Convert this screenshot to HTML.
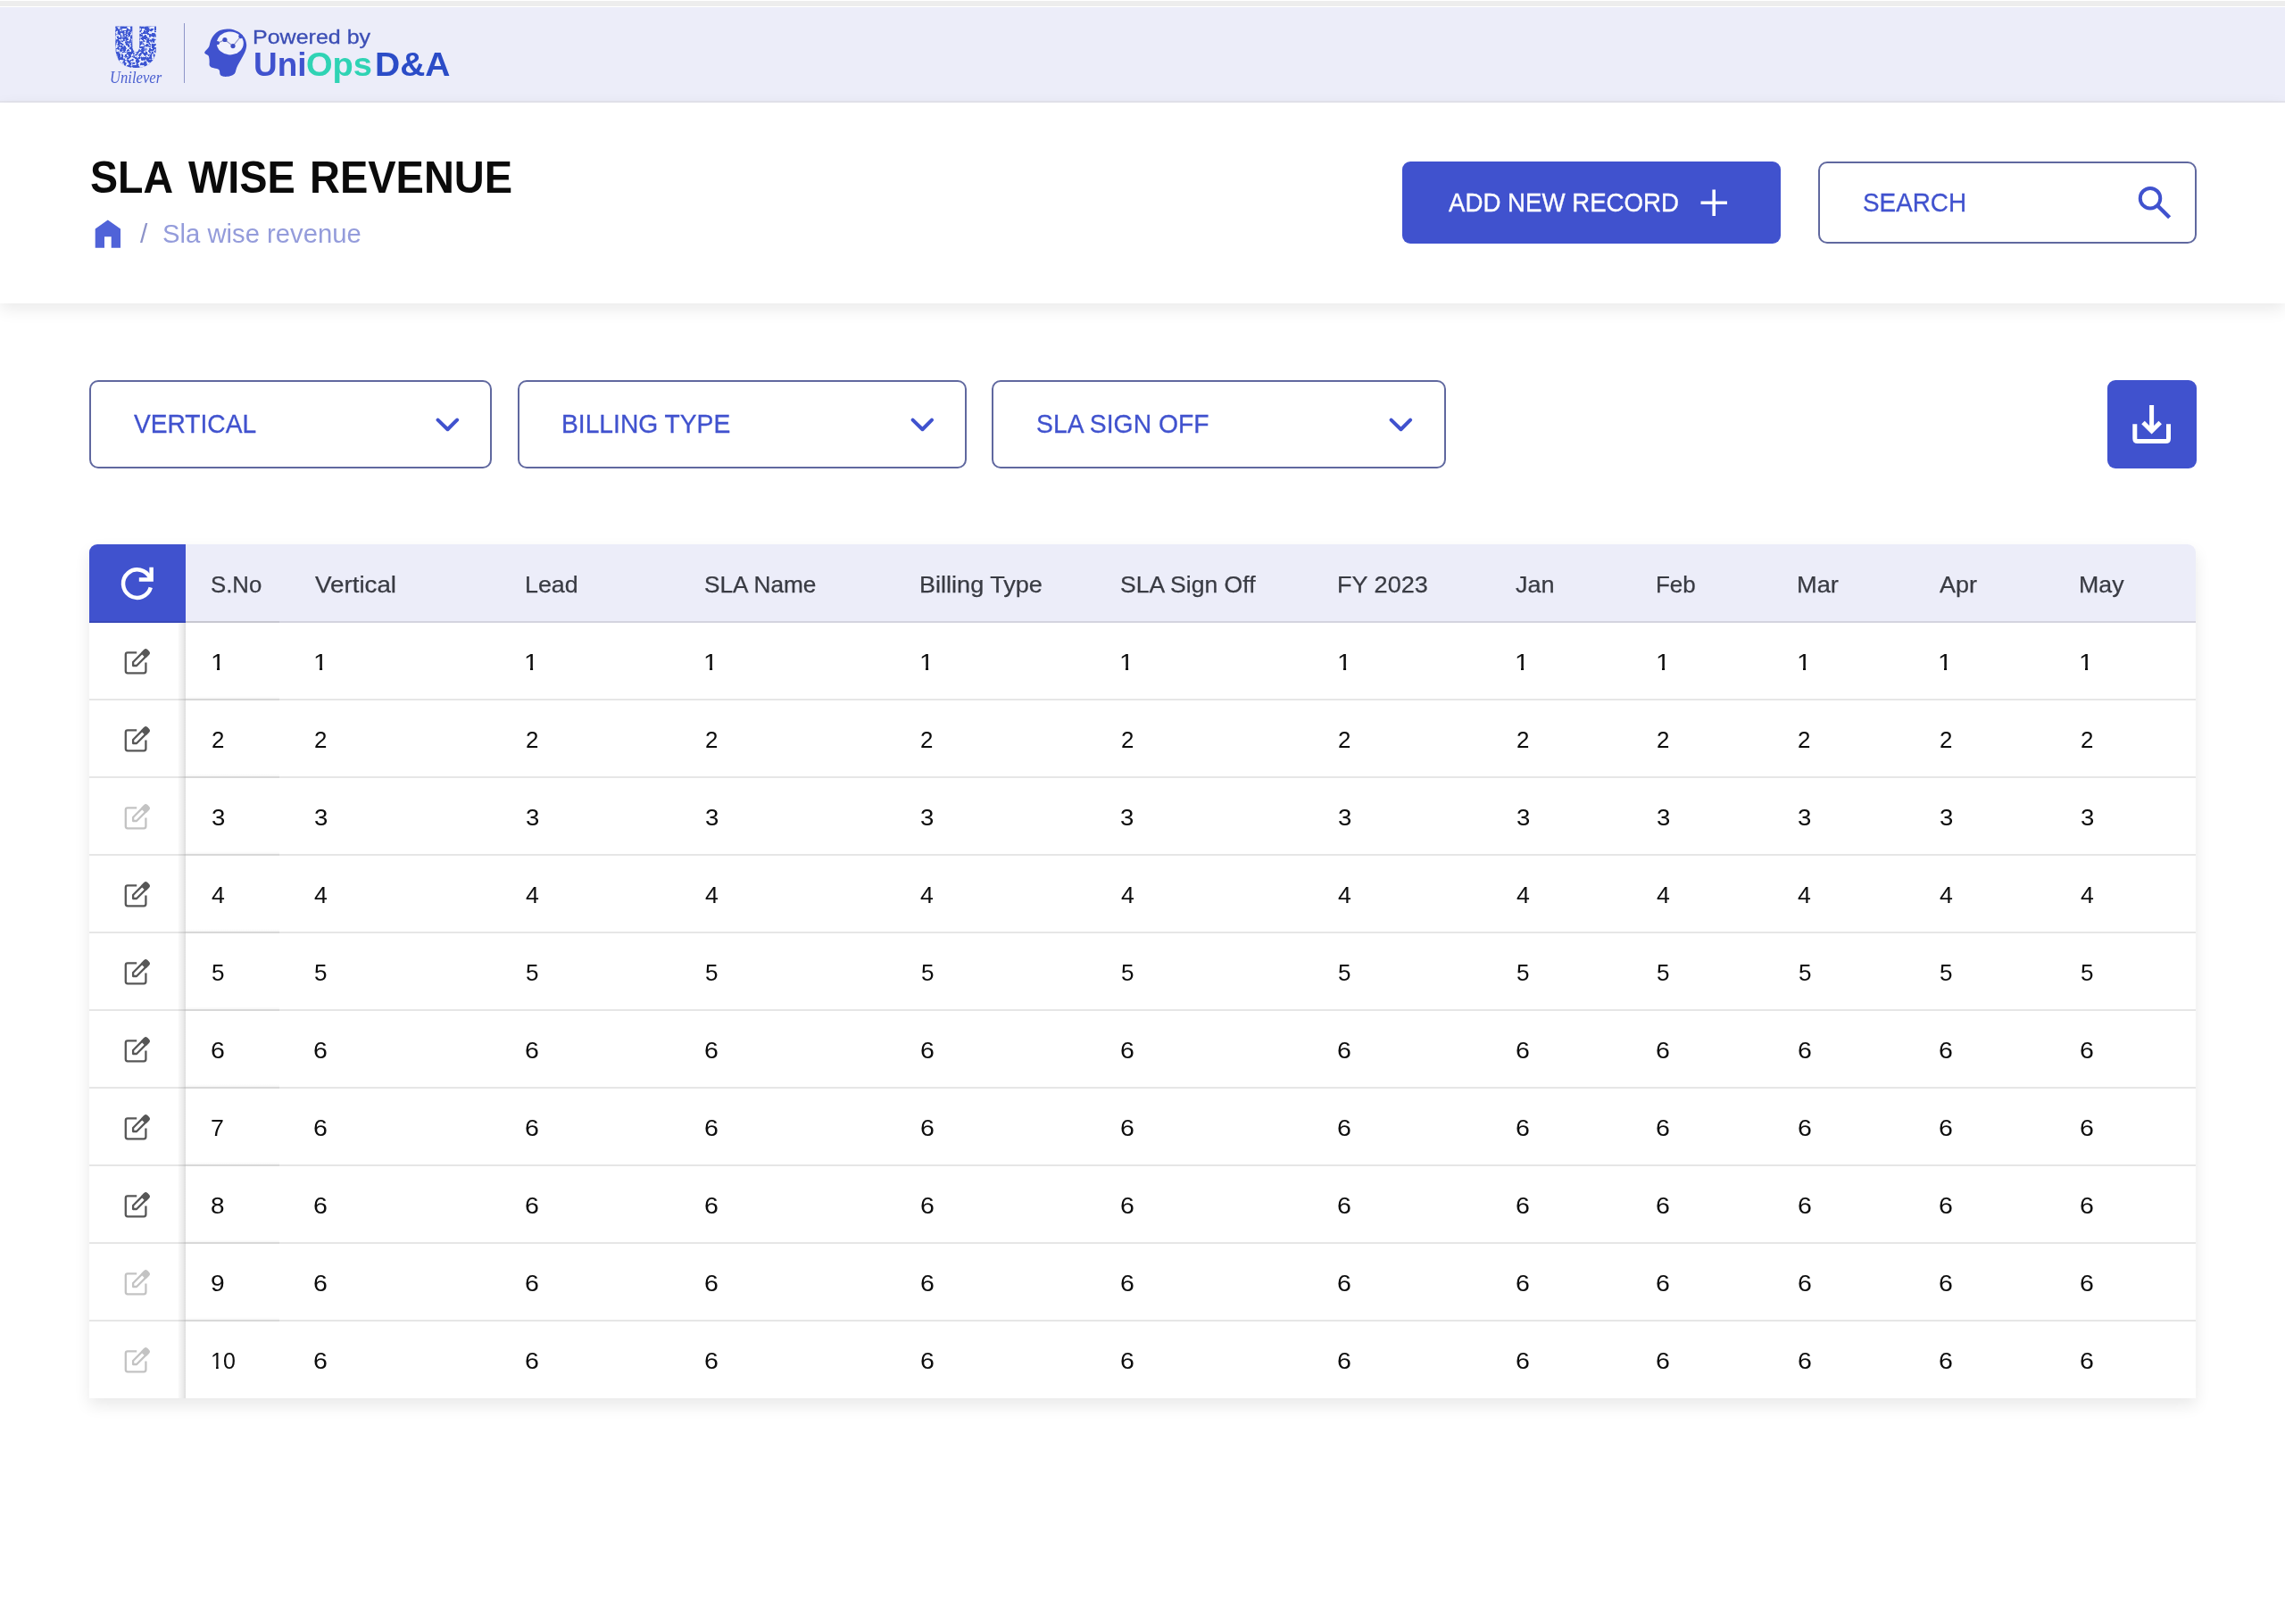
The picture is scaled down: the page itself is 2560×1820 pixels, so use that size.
<!DOCTYPE html>
<html lang="en">
<head>
<meta charset="utf-8">
<title>SLA Wise Revenue</title>
<style>
*{box-sizing:border-box;margin:0;padding:0}
html,body{width:2560px;height:1820px;background:#fff;overflow:hidden}
body{position:relative;font-family:"Liberation Sans",sans-serif;color:#111}
.abs{position:absolute}
.t{position:absolute;white-space:nowrap;line-height:1}
.f{transform-origin:0 0}
/* top strip + header bar */
#strip{left:0;top:1px;width:2560px;height:6px;background:#ededed}
#topbar{left:0;top:8px;width:2560px;height:107px;background:#ecedf9;border-bottom:2px solid #e4e4ed}
/* title section */
#titlesec{left:0;top:115px;width:2560px;height:225px;background:#fff;box-shadow:0 6px 18px rgba(0,0,0,.09)}
/* buttons */
#addbtn{left:1571px;top:181px;width:424px;height:92px;background:#4052ce;border-radius:9px}
#search{left:2037px;top:181px;width:424px;height:92px;border:2px solid #60689f;border-radius:10px;background:#fff}
/* filters */
.filter{position:absolute;top:426px;height:99px;border:2px solid #60689f;border-radius:10px;background:#fff}
#dl{left:2361px;top:426px;width:100px;height:99px;background:#4052ce;border-radius:9px}
/* table */
#tbl{left:100px;top:610px;width:2360px;height:957px;background:#fff;border-radius:9px 9px 0 0;box-shadow:0 8px 18px rgba(0,0,0,.09)}
#thead{left:100px;top:610px;width:2360px;height:88px;background:#ecedf9;border-radius:9px 9px 0 0}
#thblue{left:100px;top:610px;width:108px;height:88px;background:#4052ce;border-radius:9px 0 0 0}
.th{color:#393b43;-webkit-text-stroke:.25px #393b43}
.rowline{position:absolute;left:100px;width:2360px;height:2px;background:#e6e6e6}
.rowline2{position:absolute;left:208px;width:105px;height:5px;background:linear-gradient(to bottom,rgba(0,0,0,0),rgba(0,0,0,.035) 60%,rgba(0,0,0,.035) 60%,#d8d8d8 60%)}
#hband2{left:208px;top:696px;width:105px;height:2px;background:rgba(0,0,0,.06)}
.td{color:#0d0d0d}
.one{clip-path:polygon(0 0,.347em 0,.347em 1em,.24em 1em,.24em .735em,0 .735em)}
.ten{clip-path:polygon(0 0,100% 0,100% 1em,.53em 1em,.53em .735em,.347em .735em,.347em 1em,.243em 1em,.243em .735em,0 .735em)}
#colshadow{left:199px;top:698px;width:9px;height:869px;background:linear-gradient(to right,rgba(0,0,0,0),rgba(0,0,0,.03) 20%,rgba(0,0,0,.075) 65%,rgba(0,0,0,.135))}
#hband{left:100px;top:696px;width:2360px;height:2px;background:rgba(0,0,0,.10)}
</style>
</head>
<body>
<div class="abs" id="strip"></div>
<div class="abs" id="topbar"></div>
<div class="abs" id="titlesec"></div>
<svg class="abs" style="left:120px;top:24px" width="70" height="56" viewBox="120 24 70 56">
<defs>
<filter id="spk" x="0" y="0" width="100%" height="100%"><feTurbulence type="fractalNoise" baseFrequency="0.34" numOctaves="2" seed="7" result="n"/><feColorMatrix in="n" type="matrix" values="0 0 0 0 0.78  0 0 0 0 0.82  0 0 0 0 0.97  0 0 0 8 -3.8"/></filter>
<clipPath id="uc"><path d="M129.3,29.5H148.3V50Q148.3,58.5 152.4,58.5Q156.3,58.5 156.3,50V29.5H175V52Q175,76 152.2,76Q129.3,76 129.3,52Z"/></clipPath>
</defs>
<g clip-path="url(#uc)"><rect x="120" y="24" width="70" height="56" fill="#3d56d2"/><rect x="120" y="24" width="70" height="56" filter="url(#spk)"/></g>
</svg>
<div class="abs" style="left:205.5px;top:26px;width:1.6px;height:67px;background:#8d95c8"></div>
<svg class="abs" style="left:226px;top:28px" width="56" height="62" viewBox="226 28 56 62">
<path d="M254.5,32.4C266,32 276.2,40 276.2,50.5C276.2,56 273,61.5 270,66.7C267.5,71 265,75 264.3,78.8C263.8,82 262.5,83.5 260,84.4C256.5,85.8 253,86.2 250.5,85.8C248.2,85.4 246.6,84.6 246.3,82.6C246.1,81 246.3,79.4 245.4,78.3C244.2,76.9 242,76.9 240.3,76.5C238,76 236.5,75.6 235.6,74.6C234.4,73.2 234.5,72 234.6,70.5C234.7,68.5 234.6,66.5 234.2,64.6C234,63.5 233.9,62.8 233.3,62.2C232,61.2 230.4,60.8 229.5,59.8C228.8,59 229.2,58.2 230,57.2C231.5,55.5 233.4,54 234.2,52.2C235,50 235.2,48 235.8,46.2C236.6,43.5 237.8,41.5 239.5,39.4C241.5,37 243.8,35.3 246.4,34.1C249,33 251.5,32.5 254.5,32.4Z" fill="#4052ce"/>
<ellipse cx="257.8" cy="48.4" rx="15" ry="13" fill="#f1f2fc"/>
<path d="M244.6,48L251.9,44.5L261,51.6L269.6,41" stroke="#8a90c4" stroke-width="1.1" fill="none"/>
<circle cx="251.9" cy="44.5" r="2.6" fill="#3f4fc4"/><circle cx="261" cy="51.6" r="2.6" fill="#3f4fc4"/>
<circle cx="269.6" cy="40.8" r="2.4" fill="#4052ce"/><circle cx="243.8" cy="48.2" r="2.1" fill="#4052ce"/>
</svg>
<div class="t f " style="left:123.06px;top:78.00px;font-size:18.78px;transform:scaleX(0.8855);color:#4a5fd0;font-family:'Liberation Serif',serif;font-style:italic;">Unilever</div>
<div class="t f " style="left:283.14px;top:31.00px;font-size:21.82px;transform:scaleX(1.1469);color:#3c4eb5;-webkit-text-stroke:.3px #3c4eb5;">Powered by</div>
<div id="brand" style="position:absolute;left:0;top:0"><span class="t f " style="left:283.79px;top:54.00px;font-size:37.53px;transform:scaleX(0.9831);color:#4052ce;font-weight:700;">Uni</span><span class="t f " style="left:343.28px;top:54.00px;font-size:37.53px;transform:scaleX(1.0144);color:#2fd3b4;font-weight:700;">Ops</span> <span class="t f " style="left:419.87px;top:54.00px;font-size:37.53px;transform:scaleX(1.0402);color:#2b4cc7;font-weight:700;">D&amp;A</span></div>

<svg class="abs" style="left:104px;top:244px" width="34" height="36" viewBox="104 244 34 36"><path d="M120.8,246.4L135,256.5V277.8H124.7V265.3H117V277.8H106.7V256.5Z" fill="#5063d8"/></svg>
<div class="abs" id="addbtn"></div>
<svg class="abs" style="left:1900px;top:207px" width="40" height="40" viewBox="1900 207 40 40" stroke="#fff" stroke-width="3.6" fill="none"><path d="M1905.5,227.3H1935M1920.2,212.5V242"/></svg>
<div class="abs" id="search"></div>
<svg class="abs" style="left:2390px;top:204px" width="48" height="48" viewBox="2390 204 48 48" stroke="#4052ce" fill="none"><circle cx="2409" cy="222.2" r="11.25" stroke-width="4"/><path d="M2417,230.2L2430.6,243.8" stroke-width="4.4"/></svg>
<div class="filter" style="left:100px;width:451px"></div>
<div class="filter" style="left:580px;width:503px"></div>
<div class="filter" style="left:1111px;width:509px"></div>
<svg class="abs" style="left:484px;top:460px" width="36" height="32" viewBox="484 460 36 32" stroke="#4052ce" stroke-width="4.1" fill="none" stroke-linecap="round" stroke-linejoin="round"><path d="M490.6,470.6L501.5,481.2L512.1,470.6"/></svg>
<svg class="abs" style="left:1015.6px;top:460px" width="36" height="32" viewBox="1015.6 460 36 32" stroke="#4052ce" stroke-width="4.1" fill="none" stroke-linecap="round" stroke-linejoin="round"><path d="M1022.2,470.6L1033.05,481.2L1043.6,470.6"/></svg>
<svg class="abs" style="left:1552.4px;top:460px" width="36" height="32" viewBox="1552.4 460 36 32" stroke="#4052ce" stroke-width="4.1" fill="none" stroke-linecap="round" stroke-linejoin="round"><path d="M1559,470.6L1569.9,481.2L1580.5,470.6"/></svg>
<h1 id="title" style="position:absolute;left:0;top:0;font-size:inherit;font-weight:inherit"><span class="t f " style="left:100.60px;top:174.00px;font-size:49.45px;transform:scaleX(0.9410);color:#0b0b0b;font-weight:700;">SLA</span> <span class="t f " style="left:211.40px;top:174.00px;font-size:49.45px;transform:scaleX(0.9471);color:#0b0b0b;font-weight:700;">WISE</span> <span class="t f " style="left:347.23px;top:174.00px;font-size:49.45px;transform:scaleX(0.9500);color:#0b0b0b;font-weight:700;">REVENUE</span></h1>
<div class="t f " style="left:157.30px;top:247.00px;font-size:29.96px;transform:scaleX(0.9982);color:#8d93c9;">/</div>
<div class="t f " style="left:181.78px;top:247.00px;font-size:29.67px;transform:scaleX(0.9867);color:#949cdb;">Sla wise revenue</div>
<div class="t f " style="left:1622.53px;top:212.00px;font-size:29.53px;transform:scaleX(0.9363);color:#fff;-webkit-text-stroke:.35px #fff;">ADD NEW RECORD</div>
<div class="t f " style="left:2087.25px;top:212.00px;font-size:29.53px;transform:scaleX(0.9431);color:#4052ce;-webkit-text-stroke:.3px #4052ce;">SEARCH</div>
<div class="t f " style="left:150.26px;top:460.00px;font-size:29.96px;transform:scaleX(0.9392);color:#4052ce;-webkit-text-stroke:.3px #4052ce;">VERTICAL</div>
<div class="t f " style="left:629.27px;top:460.00px;font-size:29.96px;transform:scaleX(0.9420);color:#4052ce;-webkit-text-stroke:.3px #4052ce;">BILLING TYPE</div>
<div class="t f " style="left:1161.02px;top:460.00px;font-size:29.96px;transform:scaleX(0.9458);color:#4052ce;-webkit-text-stroke:.3px #4052ce;">SLA SIGN OFF</div>
<div class="abs" id="dl"></div>
<svg class="abs" style="left:2380px;top:445px" width="62" height="62" viewBox="2380 445 62 62" stroke="#fff" stroke-width="5" fill="none"><path d="M2391.8,475.3V491.5Q2391.8,494.5 2394.8,494.5H2426.5Q2429.5,494.5 2429.5,491.5V475.3"/><path d="M2410.6,454V482.5M2401,473.5L2410.6,483L2420.2,473.5" stroke-linejoin="miter"/></svg>
<div class="abs" id="tbl"></div>
<div class="abs" id="thead"></div>
<div class="abs" id="thblue"></div>
<div class="abs" id="hband"></div><div class="abs" id="hband2"></div>
<svg class="abs" style="left:124px;top:624px" width="60" height="60" viewBox="124 624 60 60" fill="none" stroke="#fff"><path d="M168.04,647.71A15.7,15.7 0 1 0 168.79,658.43" stroke-width="4.5"/><path d="M169.6,635.8V649.6H155.8" stroke-width="4.5" stroke-linejoin="miter"/></svg>
<div class="t f th" style="left:235.94px;top:643.00px;font-size:25.45px;transform:scaleX(1.0127);">S.No</div>
<div class="t f th" style="left:352.86px;top:643.00px;font-size:25.45px;transform:scaleX(1.0913);">Vertical</div>
<div class="t f th" style="left:587.58px;top:643.00px;font-size:25.45px;transform:scaleX(1.0552);">Lead</div>
<div class="t f th" style="left:788.62px;top:643.00px;font-size:25.45px;transform:scaleX(1.0314);">SLA Name</div>
<div class="t f th" style="left:1030.07px;top:643.00px;font-size:25.45px;transform:scaleX(1.0640);">Billing Type</div>
<div class="t f th" style="left:1254.60px;top:643.00px;font-size:25.45px;transform:scaleX(1.0437);">SLA Sign Off</div>
<div class="t f th" style="left:1497.77px;top:643.00px;font-size:25.45px;transform:scaleX(1.0635);">FY 2023</div>
<div class="t f th" style="left:1697.99px;top:643.00px;font-size:25.45px;transform:scaleX(1.0639);">Jan</div>
<div class="t f th" style="left:1855.06px;top:643.00px;font-size:25.45px;transform:scaleX(1.0214);">Feb</div>
<div class="t f th" style="left:2012.95px;top:643.00px;font-size:25.45px;transform:scaleX(1.0710);">Mar</div>
<div class="t f th" style="left:2172.83px;top:643.00px;font-size:25.45px;transform:scaleX(1.0604);">Apr</div>
<div class="t f th" style="left:2329.49px;top:643.00px;font-size:25.45px;transform:scaleX(1.0512);">May</div>
<svg class="abs" style="left:138px;top:725px" width="34" height="34" viewBox="0 0 34 34" fill="none" stroke="#575757" stroke-width="2.3" stroke-linejoin="round"><path d="M15.2,6.4H5Q2.8,6.4 2.8,8.6V27.1Q2.8,29.3 5,29.3H23.2Q25.4,29.3 25.4,27.1V17.6"/><g transform="translate(11.1,21) rotate(-45)"><path d="M0,0L2.8,-2.8H21Q22.8,-2.8 22.8,-1V1Q22.8,2.8 21,2.8H2.8Z"/><path d="M17.2,-2.8H21Q22.8,-2.8 22.8,-1V1Q22.8,2.8 21,2.8H17.2Z" fill="#575757"/></g></svg>
<div class="t f td one" style="left:235.54px;top:729.00px;font-size:26.44px;transform:scaleX(1.1)">1</div>
<div class="t f td one" style="left:350.94px;top:729.00px;font-size:26.44px;transform:scaleX(1.1)">1</div>
<div class="t f td one" style="left:587.44px;top:729.00px;font-size:26.44px;transform:scaleX(1.1)">1</div>
<div class="t f td one" style="left:788.24px;top:729.00px;font-size:26.44px;transform:scaleX(1.1)">1</div>
<div class="t f td one" style="left:1030.04px;top:729.00px;font-size:26.44px;transform:scaleX(1.1)">1</div>
<div class="t f td one" style="left:1254.14px;top:729.00px;font-size:26.44px;transform:scaleX(1.1)">1</div>
<div class="t f td one" style="left:1497.64px;top:729.00px;font-size:26.44px;transform:scaleX(1.1)">1</div>
<div class="t f td one" style="left:1697.24px;top:729.00px;font-size:26.44px;transform:scaleX(1.1)">1</div>
<div class="t f td one" style="left:1854.94px;top:729.00px;font-size:26.44px;transform:scaleX(1.1)">1</div>
<div class="t f td one" style="left:2013.04px;top:729.00px;font-size:26.44px;transform:scaleX(1.1)">1</div>
<div class="t f td one" style="left:2171.34px;top:729.00px;font-size:26.44px;transform:scaleX(1.1)">1</div>
<div class="t f td one" style="left:2329.44px;top:729.00px;font-size:26.44px;transform:scaleX(1.1)">1</div>
<div class="rowline" style="top:783px"></div><div class="rowline2" style="top:780px"></div>
<svg class="abs" style="left:138px;top:812px" width="34" height="34" viewBox="0 0 34 34" fill="none" stroke="#575757" stroke-width="2.3" stroke-linejoin="round"><path d="M15.2,6.4H5Q2.8,6.4 2.8,8.6V27.1Q2.8,29.3 5,29.3H23.2Q25.4,29.3 25.4,27.1V17.6"/><g transform="translate(11.1,21) rotate(-45)"><path d="M0,0L2.8,-2.8H21Q22.8,-2.8 22.8,-1V1Q22.8,2.8 21,2.8H2.8Z"/><path d="M17.2,-2.8H21Q22.8,-2.8 22.8,-1V1Q22.8,2.8 21,2.8H17.2Z" fill="#575757"/></g></svg>
<div class="t f td" style="left:236.90px;top:816.00px;font-size:26.36px;transform:scaleX(0.9837);">2</div>
<div class="t f td" style="left:352.30px;top:816.00px;font-size:26.36px;transform:scaleX(0.9837);">2</div>
<div class="t f td" style="left:588.80px;top:816.00px;font-size:26.36px;transform:scaleX(0.9837);">2</div>
<div class="t f td" style="left:789.60px;top:816.00px;font-size:26.36px;transform:scaleX(0.9837);">2</div>
<div class="t f td" style="left:1031.40px;top:816.00px;font-size:26.36px;transform:scaleX(0.9837);">2</div>
<div class="t f td" style="left:1255.50px;top:816.00px;font-size:26.36px;transform:scaleX(0.9837);">2</div>
<div class="t f td" style="left:1499.00px;top:816.00px;font-size:26.36px;transform:scaleX(0.9837);">2</div>
<div class="t f td" style="left:1698.60px;top:816.00px;font-size:26.36px;transform:scaleX(0.9837);">2</div>
<div class="t f td" style="left:1856.30px;top:816.00px;font-size:26.36px;transform:scaleX(0.9837);">2</div>
<div class="t f td" style="left:2014.40px;top:816.00px;font-size:26.36px;transform:scaleX(0.9837);">2</div>
<div class="t f td" style="left:2172.70px;top:816.00px;font-size:26.36px;transform:scaleX(0.9837);">2</div>
<div class="t f td" style="left:2330.80px;top:816.00px;font-size:26.36px;transform:scaleX(0.9837);">2</div>
<div class="rowline" style="top:870px"></div><div class="rowline2" style="top:867px"></div>
<svg class="abs" style="left:138px;top:899px" width="34" height="34" viewBox="0 0 34 34" fill="none" stroke="#c3c3c3" stroke-width="2.3" stroke-linejoin="round"><path d="M15.2,6.4H5Q2.8,6.4 2.8,8.6V27.1Q2.8,29.3 5,29.3H23.2Q25.4,29.3 25.4,27.1V17.6"/><g transform="translate(11.1,21) rotate(-45)"><path d="M0,0L2.8,-2.8H21Q22.8,-2.8 22.8,-1V1Q22.8,2.8 21,2.8H2.8Z"/><path d="M17.2,-2.8H21Q22.8,-2.8 22.8,-1V1Q22.8,2.8 21,2.8H17.2Z" fill="#c3c3c3"/></g></svg>
<div class="t f td" style="left:236.87px;top:903.00px;font-size:26.29px;transform:scaleX(1.0490);">3</div>
<div class="t f td" style="left:352.27px;top:903.00px;font-size:26.29px;transform:scaleX(1.0490);">3</div>
<div class="t f td" style="left:588.77px;top:903.00px;font-size:26.29px;transform:scaleX(1.0490);">3</div>
<div class="t f td" style="left:789.57px;top:903.00px;font-size:26.29px;transform:scaleX(1.0490);">3</div>
<div class="t f td" style="left:1031.37px;top:903.00px;font-size:26.29px;transform:scaleX(1.0490);">3</div>
<div class="t f td" style="left:1255.47px;top:903.00px;font-size:26.29px;transform:scaleX(1.0490);">3</div>
<div class="t f td" style="left:1498.97px;top:903.00px;font-size:26.29px;transform:scaleX(1.0490);">3</div>
<div class="t f td" style="left:1698.57px;top:903.00px;font-size:26.29px;transform:scaleX(1.0490);">3</div>
<div class="t f td" style="left:1856.27px;top:903.00px;font-size:26.29px;transform:scaleX(1.0490);">3</div>
<div class="t f td" style="left:2014.37px;top:903.00px;font-size:26.29px;transform:scaleX(1.0490);">3</div>
<div class="t f td" style="left:2172.67px;top:903.00px;font-size:26.29px;transform:scaleX(1.0490);">3</div>
<div class="t f td" style="left:2330.77px;top:903.00px;font-size:26.29px;transform:scaleX(1.0490);">3</div>
<div class="rowline" style="top:957px"></div><div class="rowline2" style="top:954px"></div>
<svg class="abs" style="left:138px;top:986px" width="34" height="34" viewBox="0 0 34 34" fill="none" stroke="#575757" stroke-width="2.3" stroke-linejoin="round"><path d="M15.2,6.4H5Q2.8,6.4 2.8,8.6V27.1Q2.8,29.3 5,29.3H23.2Q25.4,29.3 25.4,27.1V17.6"/><g transform="translate(11.1,21) rotate(-45)"><path d="M0,0L2.8,-2.8H21Q22.8,-2.8 22.8,-1V1Q22.8,2.8 21,2.8H2.8Z"/><path d="M17.2,-2.8H21Q22.8,-2.8 22.8,-1V1Q22.8,2.8 21,2.8H17.2Z" fill="#575757"/></g></svg>
<div class="t f td" style="left:236.90px;top:990.00px;font-size:26.22px;transform:scaleX(1.0196);">4</div>
<div class="t f td" style="left:352.30px;top:990.00px;font-size:26.22px;transform:scaleX(1.0196);">4</div>
<div class="t f td" style="left:588.80px;top:990.00px;font-size:26.22px;transform:scaleX(1.0196);">4</div>
<div class="t f td" style="left:789.60px;top:990.00px;font-size:26.22px;transform:scaleX(1.0196);">4</div>
<div class="t f td" style="left:1031.40px;top:990.00px;font-size:26.22px;transform:scaleX(1.0196);">4</div>
<div class="t f td" style="left:1255.50px;top:990.00px;font-size:26.22px;transform:scaleX(1.0196);">4</div>
<div class="t f td" style="left:1499.00px;top:990.00px;font-size:26.22px;transform:scaleX(1.0196);">4</div>
<div class="t f td" style="left:1698.60px;top:990.00px;font-size:26.22px;transform:scaleX(1.0196);">4</div>
<div class="t f td" style="left:1856.30px;top:990.00px;font-size:26.22px;transform:scaleX(1.0196);">4</div>
<div class="t f td" style="left:2014.40px;top:990.00px;font-size:26.22px;transform:scaleX(1.0196);">4</div>
<div class="t f td" style="left:2172.70px;top:990.00px;font-size:26.22px;transform:scaleX(1.0196);">4</div>
<div class="t f td" style="left:2330.80px;top:990.00px;font-size:26.22px;transform:scaleX(1.0196);">4</div>
<div class="rowline" style="top:1044px"></div><div class="rowline2" style="top:1041px"></div>
<svg class="abs" style="left:138px;top:1073px" width="34" height="34" viewBox="0 0 34 34" fill="none" stroke="#575757" stroke-width="2.3" stroke-linejoin="round"><path d="M15.2,6.4H5Q2.8,6.4 2.8,8.6V27.1Q2.8,29.3 5,29.3H23.2Q25.4,29.3 25.4,27.1V17.6"/><g transform="translate(11.1,21) rotate(-45)"><path d="M0,0L2.8,-2.8H21Q22.8,-2.8 22.8,-1V1Q22.8,2.8 21,2.8H2.8Z"/><path d="M17.2,-2.8H21Q22.8,-2.8 22.8,-1V1Q22.8,2.8 21,2.8H17.2Z" fill="#575757"/></g></svg>
<div class="t f td" style="left:237.06px;top:1077.00px;font-size:26.15px;transform:scaleX(0.9985);">5</div>
<div class="t f td" style="left:352.46px;top:1077.00px;font-size:26.15px;transform:scaleX(0.9985);">5</div>
<div class="t f td" style="left:588.96px;top:1077.00px;font-size:26.15px;transform:scaleX(0.9985);">5</div>
<div class="t f td" style="left:789.76px;top:1077.00px;font-size:26.15px;transform:scaleX(0.9985);">5</div>
<div class="t f td" style="left:1031.56px;top:1077.00px;font-size:26.15px;transform:scaleX(0.9985);">5</div>
<div class="t f td" style="left:1255.66px;top:1077.00px;font-size:26.15px;transform:scaleX(0.9985);">5</div>
<div class="t f td" style="left:1499.16px;top:1077.00px;font-size:26.15px;transform:scaleX(0.9985);">5</div>
<div class="t f td" style="left:1698.76px;top:1077.00px;font-size:26.15px;transform:scaleX(0.9985);">5</div>
<div class="t f td" style="left:1856.46px;top:1077.00px;font-size:26.15px;transform:scaleX(0.9985);">5</div>
<div class="t f td" style="left:2014.56px;top:1077.00px;font-size:26.15px;transform:scaleX(0.9985);">5</div>
<div class="t f td" style="left:2172.86px;top:1077.00px;font-size:26.15px;transform:scaleX(0.9985);">5</div>
<div class="t f td" style="left:2330.96px;top:1077.00px;font-size:26.15px;transform:scaleX(0.9985);">5</div>
<div class="rowline" style="top:1131px"></div><div class="rowline2" style="top:1128px"></div>
<svg class="abs" style="left:138px;top:1160px" width="34" height="34" viewBox="0 0 34 34" fill="none" stroke="#575757" stroke-width="2.3" stroke-linejoin="round"><path d="M15.2,6.4H5Q2.8,6.4 2.8,8.6V27.1Q2.8,29.3 5,29.3H23.2Q25.4,29.3 25.4,27.1V17.6"/><g transform="translate(11.1,21) rotate(-45)"><path d="M0,0L2.8,-2.8H21Q22.8,-2.8 22.8,-1V1Q22.8,2.8 21,2.8H2.8Z"/><path d="M17.2,-2.8H21Q22.8,-2.8 22.8,-1V1Q22.8,2.8 21,2.8H17.2Z" fill="#575757"/></g></svg>
<div class="t f td" style="left:236.07px;top:1164.00px;font-size:26.07px;transform:scaleX(1.0947);">6</div>
<div class="t f td" style="left:351.47px;top:1164.00px;font-size:26.07px;transform:scaleX(1.0947);">6</div>
<div class="t f td" style="left:587.97px;top:1164.00px;font-size:26.07px;transform:scaleX(1.0947);">6</div>
<div class="t f td" style="left:788.77px;top:1164.00px;font-size:26.07px;transform:scaleX(1.0947);">6</div>
<div class="t f td" style="left:1030.57px;top:1164.00px;font-size:26.07px;transform:scaleX(1.0947);">6</div>
<div class="t f td" style="left:1254.67px;top:1164.00px;font-size:26.07px;transform:scaleX(1.0947);">6</div>
<div class="t f td" style="left:1498.17px;top:1164.00px;font-size:26.07px;transform:scaleX(1.0947);">6</div>
<div class="t f td" style="left:1697.77px;top:1164.00px;font-size:26.07px;transform:scaleX(1.0947);">6</div>
<div class="t f td" style="left:1855.47px;top:1164.00px;font-size:26.07px;transform:scaleX(1.0947);">6</div>
<div class="t f td" style="left:2013.57px;top:1164.00px;font-size:26.07px;transform:scaleX(1.0947);">6</div>
<div class="t f td" style="left:2171.87px;top:1164.00px;font-size:26.07px;transform:scaleX(1.0947);">6</div>
<div class="t f td" style="left:2329.97px;top:1164.00px;font-size:26.07px;transform:scaleX(1.0947);">6</div>
<div class="rowline" style="top:1218px"></div><div class="rowline2" style="top:1215px"></div>
<svg class="abs" style="left:138px;top:1247px" width="34" height="34" viewBox="0 0 34 34" fill="none" stroke="#575757" stroke-width="2.3" stroke-linejoin="round"><path d="M15.2,6.4H5Q2.8,6.4 2.8,8.6V27.1Q2.8,29.3 5,29.3H23.2Q25.4,29.3 25.4,27.1V17.6"/><g transform="translate(11.1,21) rotate(-45)"><path d="M0,0L2.8,-2.8H21Q22.8,-2.8 22.8,-1V1Q22.8,2.8 21,2.8H2.8Z"/><path d="M17.2,-2.8H21Q22.8,-2.8 22.8,-1V1Q22.8,2.8 21,2.8H17.2Z" fill="#575757"/></g></svg>
<div class="t f td" style="left:236.16px;top:1251.00px;font-size:26.00px;transform:scaleX(1.0313);">7</div>
<div class="t f td" style="left:351.47px;top:1251.00px;font-size:26.00px;transform:scaleX(1.0977);">6</div>
<div class="t f td" style="left:587.97px;top:1251.00px;font-size:26.00px;transform:scaleX(1.0977);">6</div>
<div class="t f td" style="left:788.77px;top:1251.00px;font-size:26.00px;transform:scaleX(1.0977);">6</div>
<div class="t f td" style="left:1030.57px;top:1251.00px;font-size:26.00px;transform:scaleX(1.0977);">6</div>
<div class="t f td" style="left:1254.67px;top:1251.00px;font-size:26.00px;transform:scaleX(1.0977);">6</div>
<div class="t f td" style="left:1498.17px;top:1251.00px;font-size:26.00px;transform:scaleX(1.0977);">6</div>
<div class="t f td" style="left:1697.77px;top:1251.00px;font-size:26.00px;transform:scaleX(1.0977);">6</div>
<div class="t f td" style="left:1855.47px;top:1251.00px;font-size:26.00px;transform:scaleX(1.0977);">6</div>
<div class="t f td" style="left:2013.57px;top:1251.00px;font-size:26.00px;transform:scaleX(1.0977);">6</div>
<div class="t f td" style="left:2171.87px;top:1251.00px;font-size:26.00px;transform:scaleX(1.0977);">6</div>
<div class="t f td" style="left:2329.97px;top:1251.00px;font-size:26.00px;transform:scaleX(1.0977);">6</div>
<div class="rowline" style="top:1305px"></div><div class="rowline2" style="top:1302px"></div>
<svg class="abs" style="left:138px;top:1334px" width="34" height="34" viewBox="0 0 34 34" fill="none" stroke="#575757" stroke-width="2.3" stroke-linejoin="round"><path d="M15.2,6.4H5Q2.8,6.4 2.8,8.6V27.1Q2.8,29.3 5,29.3H23.2Q25.4,29.3 25.4,27.1V17.6"/><g transform="translate(11.1,21) rotate(-45)"><path d="M0,0L2.8,-2.8H21Q22.8,-2.8 22.8,-1V1Q22.8,2.8 21,2.8H2.8Z"/><path d="M17.2,-2.8H21Q22.8,-2.8 22.8,-1V1Q22.8,2.8 21,2.8H17.2Z" fill="#575757"/></g></svg>
<div class="t f td" style="left:236.42px;top:1339.00px;font-size:25.93px;transform:scaleX(1.0750);">8</div>
<div class="t f td" style="left:351.47px;top:1339.00px;font-size:25.93px;transform:scaleX(1.1008);">6</div>
<div class="t f td" style="left:587.97px;top:1339.00px;font-size:25.93px;transform:scaleX(1.1008);">6</div>
<div class="t f td" style="left:788.77px;top:1339.00px;font-size:25.93px;transform:scaleX(1.1008);">6</div>
<div class="t f td" style="left:1030.57px;top:1339.00px;font-size:25.93px;transform:scaleX(1.1008);">6</div>
<div class="t f td" style="left:1254.67px;top:1339.00px;font-size:25.93px;transform:scaleX(1.1008);">6</div>
<div class="t f td" style="left:1498.17px;top:1339.00px;font-size:25.93px;transform:scaleX(1.1008);">6</div>
<div class="t f td" style="left:1697.77px;top:1339.00px;font-size:25.93px;transform:scaleX(1.1008);">6</div>
<div class="t f td" style="left:1855.47px;top:1339.00px;font-size:25.93px;transform:scaleX(1.1008);">6</div>
<div class="t f td" style="left:2013.57px;top:1339.00px;font-size:25.93px;transform:scaleX(1.1008);">6</div>
<div class="t f td" style="left:2171.87px;top:1339.00px;font-size:25.93px;transform:scaleX(1.1008);">6</div>
<div class="t f td" style="left:2329.97px;top:1339.00px;font-size:25.93px;transform:scaleX(1.1008);">6</div>
<div class="rowline" style="top:1392px"></div><div class="rowline2" style="top:1389px"></div>
<svg class="abs" style="left:138px;top:1421px" width="34" height="34" viewBox="0 0 34 34" fill="none" stroke="#c3c3c3" stroke-width="2.3" stroke-linejoin="round"><path d="M15.2,6.4H5Q2.8,6.4 2.8,8.6V27.1Q2.8,29.3 5,29.3H23.2Q25.4,29.3 25.4,27.1V17.6"/><g transform="translate(11.1,21) rotate(-45)"><path d="M0,0L2.8,-2.8H21Q22.8,-2.8 22.8,-1V1Q22.8,2.8 21,2.8H2.8Z"/><path d="M17.2,-2.8H21Q22.8,-2.8 22.8,-1V1Q22.8,2.8 21,2.8H17.2Z" fill="#c3c3c3"/></g></svg>
<div class="t f td" style="left:236.36px;top:1426.00px;font-size:25.85px;transform:scaleX(1.0872);">9</div>
<div class="t f td" style="left:351.47px;top:1426.00px;font-size:25.85px;transform:scaleX(1.1039);">6</div>
<div class="t f td" style="left:587.97px;top:1426.00px;font-size:25.85px;transform:scaleX(1.1039);">6</div>
<div class="t f td" style="left:788.77px;top:1426.00px;font-size:25.85px;transform:scaleX(1.1039);">6</div>
<div class="t f td" style="left:1030.57px;top:1426.00px;font-size:25.85px;transform:scaleX(1.1039);">6</div>
<div class="t f td" style="left:1254.67px;top:1426.00px;font-size:25.85px;transform:scaleX(1.1039);">6</div>
<div class="t f td" style="left:1498.17px;top:1426.00px;font-size:25.85px;transform:scaleX(1.1039);">6</div>
<div class="t f td" style="left:1697.77px;top:1426.00px;font-size:25.85px;transform:scaleX(1.1039);">6</div>
<div class="t f td" style="left:1855.47px;top:1426.00px;font-size:25.85px;transform:scaleX(1.1039);">6</div>
<div class="t f td" style="left:2013.57px;top:1426.00px;font-size:25.85px;transform:scaleX(1.1039);">6</div>
<div class="t f td" style="left:2171.87px;top:1426.00px;font-size:25.85px;transform:scaleX(1.1039);">6</div>
<div class="t f td" style="left:2329.97px;top:1426.00px;font-size:25.85px;transform:scaleX(1.1039);">6</div>
<div class="rowline" style="top:1479px"></div><div class="rowline2" style="top:1476px"></div>
<svg class="abs" style="left:138px;top:1508px" width="34" height="34" viewBox="0 0 34 34" fill="none" stroke="#c3c3c3" stroke-width="2.3" stroke-linejoin="round"><path d="M15.2,6.4H5Q2.8,6.4 2.8,8.6V27.1Q2.8,29.3 5,29.3H23.2Q25.4,29.3 25.4,27.1V17.6"/><g transform="translate(11.1,21) rotate(-45)"><path d="M0,0L2.8,-2.8H21Q22.8,-2.8 22.8,-1V1Q22.8,2.8 21,2.8H2.8Z"/><path d="M17.2,-2.8H21Q22.8,-2.8 22.8,-1V1Q22.8,2.8 21,2.8H17.2Z" fill="#c3c3c3"/></g></svg>
<div class="t f td ten" style="left:235.92px;top:1513.00px;font-size:25.78px;transform:scaleX(0.97)">10</div>
<div class="t f td" style="left:351.47px;top:1513.00px;font-size:25.78px;transform:scaleX(1.1070);">6</div>
<div class="t f td" style="left:587.97px;top:1513.00px;font-size:25.78px;transform:scaleX(1.1070);">6</div>
<div class="t f td" style="left:788.77px;top:1513.00px;font-size:25.78px;transform:scaleX(1.1070);">6</div>
<div class="t f td" style="left:1030.57px;top:1513.00px;font-size:25.78px;transform:scaleX(1.1070);">6</div>
<div class="t f td" style="left:1254.67px;top:1513.00px;font-size:25.78px;transform:scaleX(1.1070);">6</div>
<div class="t f td" style="left:1498.17px;top:1513.00px;font-size:25.78px;transform:scaleX(1.1070);">6</div>
<div class="t f td" style="left:1697.77px;top:1513.00px;font-size:25.78px;transform:scaleX(1.1070);">6</div>
<div class="t f td" style="left:1855.47px;top:1513.00px;font-size:25.78px;transform:scaleX(1.1070);">6</div>
<div class="t f td" style="left:2013.57px;top:1513.00px;font-size:25.78px;transform:scaleX(1.1070);">6</div>
<div class="t f td" style="left:2171.87px;top:1513.00px;font-size:25.78px;transform:scaleX(1.1070);">6</div>
<div class="t f td" style="left:2329.97px;top:1513.00px;font-size:25.78px;transform:scaleX(1.1070);">6</div>
<div class="abs" id="colshadow"></div>
</body>
</html>
